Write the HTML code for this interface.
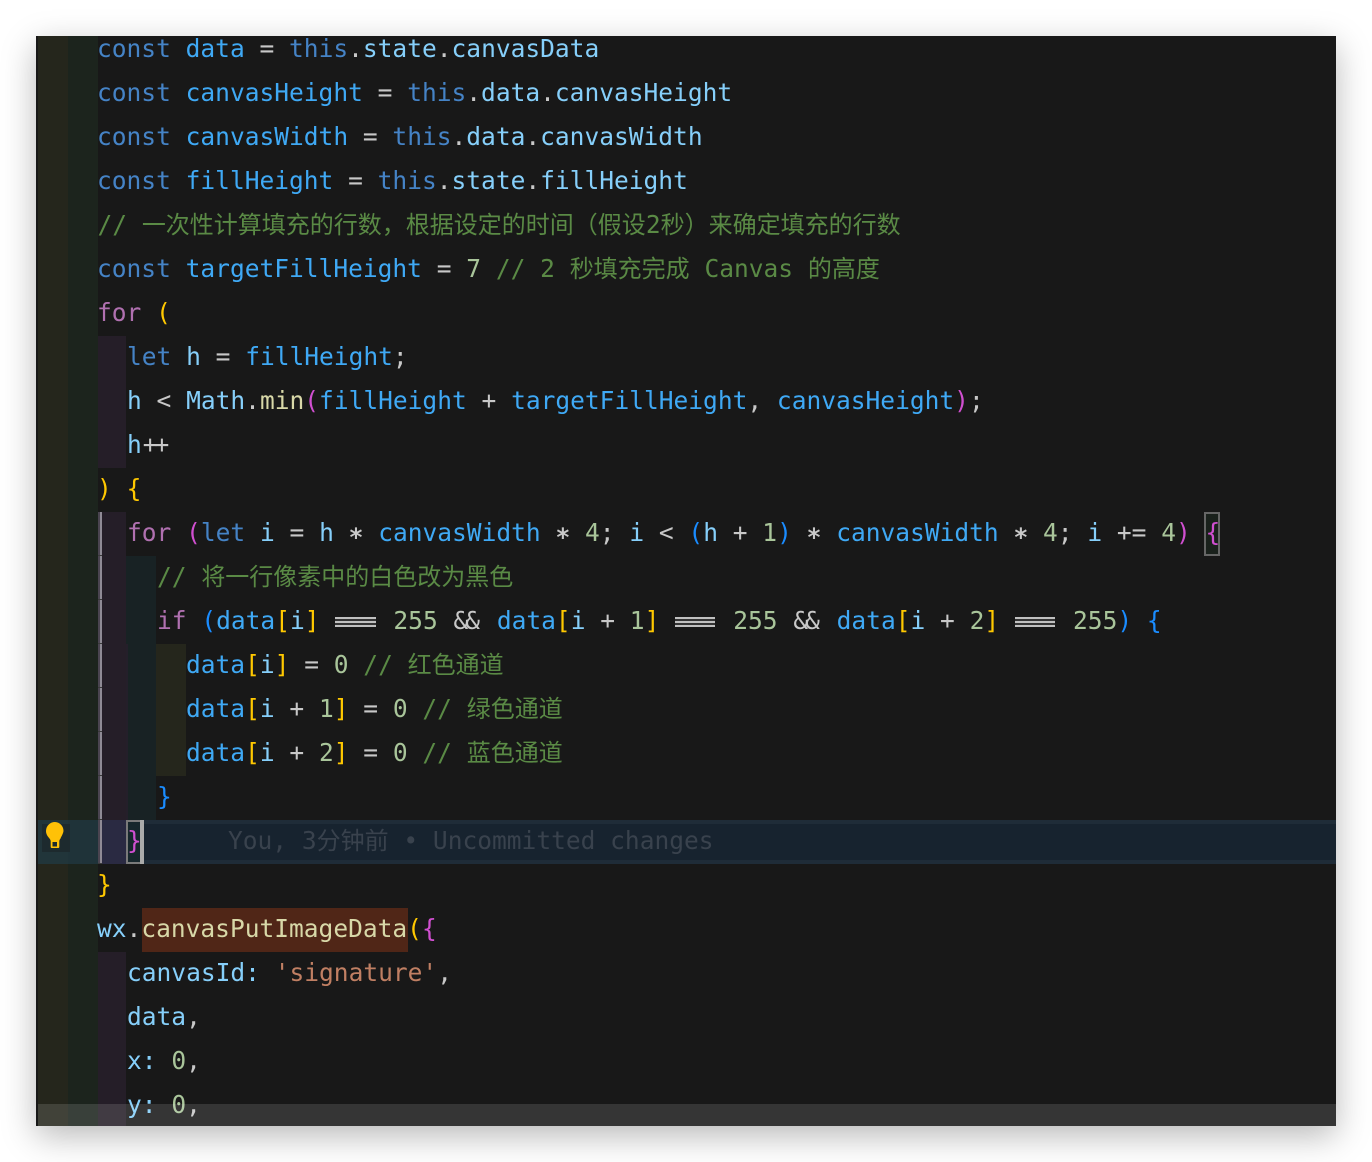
<!DOCTYPE html>
<html>
<head>
<meta charset="utf-8">
<style>
html,body{margin:0;padding:0;background:#fff}
body{width:1372px;height:1162px;position:relative;overflow:hidden}
#win{position:absolute;left:36px;top:36px;width:1300px;height:1090px;background:#181818;overflow:hidden;box-shadow:0 10px 32px rgba(0,0,0,.28)}
.b{position:absolute}
.l{position:absolute;height:44px;line-height:44px;margin-top:-1px;white-space:pre;font-family:"DejaVu Sans Mono","Liberation Mono","Noto Sans CJK SC",monospace;font-size:24.54px;color:#c8c8c8;-webkit-font-smoothing:antialiased}
.z{font-family:"Noto Sans CJK SC","WenQuanYi Zen Hei",sans-serif;font-size:24px;line-height:0}
.k{color:#4583c6}.v{color:#3fa9f5}.p{color:#86cffa}.o{color:#c8c8c8}
.f{color:#b070b0}.c{color:#5a8a45}.n{color:#a9c59a}.s{color:#c07f63}.y{color:#d8d8a8}
.g{color:#ffc800}.m{color:#d04fd0}.u{color:#1a8cff}.h{color:#39424d}
.eq{color:transparent;display:inline-block;position:relative}
.eq:before{content:"";position:absolute;left:1px;right:3px;top:18px;height:10px;background:linear-gradient(#c0c0c0 0 2px,#333 2px 4px,#c0c0c0 4px 6px,#333 6px 8px,#c0c0c0 8px 10px)}
.am{letter-spacing:-3px;margin-left:1px;margin-right:5px}
.pl{letter-spacing:-3px;margin-left:1px;margin-right:5px}
.st{position:relative;top:5px;font-weight:bold}
</style>
</head>
<body>
<div id="win">
  <!-- gutter -->
  <div class="b" style="left:2px;top:0;width:30px;height:1090px;background:#25261c"></div>
  <div class="b" style="left:32px;top:0;width:30px;height:1090px;background:#1c241d"></div>
  <!-- indent guides -->
  <div class="b" style="left:62px;top:300px;width:28px;height:132px;background:#251e28"></div>
  <div class="b" style="left:62px;top:476px;width:28px;height:352px;background:#251e28"></div>
  <div class="b" style="left:62px;top:916px;width:28px;height:174px;background:#251e28"></div>
  <div class="b" style="left:90px;top:520px;width:30px;height:264px;background:#182224"></div>
  <div class="b" style="left:90px;top:608px;width:2px;height:176px;background:#241f2a"></div>
  <div class="b" style="left:120px;top:608px;width:30px;height:132px;background:#25261c"></div>
  <!-- highlighted line -->
  <div class="b" style="left:2px;top:784px;width:1298px;height:44px;background:#17232f;box-sizing:border-box;border-top:4px solid #1f2c38;border-bottom:4px solid #1f2c38"></div>
  <div class="b" style="left:2px;top:784px;width:30px;height:44px;background:#21353a"></div>
  <div class="b" style="left:32px;top:784px;width:30px;height:44px;background:#1f3339"></div>
  <div class="b" style="left:62px;top:784px;width:28px;height:44px;background:#2a2a42"></div>
  <div class="b" style="left:6px;top:788px;width:28px;height:28px;background:#1d2a2e"></div>
  <!-- bar for scope -->
  <div class="b" style="left:62px;top:476px;width:2px;height:352px;background:repeating-linear-gradient(#4a4450 0 43px,#3a3a3a 43px 44px)"></div>
  <div class="b" style="left:64px;top:476px;width:2px;height:352px;background:repeating-linear-gradient(#8f8a95 0 43px,#3a3a3a 43px 44px)"></div>
  <!-- match bracket boxes -->
  <div class="b" style="left:90px;top:784px;width:18px;height:44px;box-sizing:border-box;border:2px solid #7a7a7a;border-right:none;background:#17272c"></div>
  <div class="b" style="left:104px;top:784px;width:4px;height:44px;background:#aaa"></div>
  <div class="b" style="left:1168px;top:476px;width:16px;height:44px;box-sizing:border-box;border:2px solid #666;background:#1a211c"></div>
  <!-- find highlight -->
  <div class="b" style="left:106px;top:872px;width:266px;height:44px;background:#502617"></div>
  <!-- bulb -->
  <svg class="b" style="left:9px;top:785px" width="20" height="28" viewBox="0 0 20 28"><path d="M10 1a9 9 0 0 0-9 9c0 3.4 1.8 5.4 3.4 7.4.8 1 1.3 2 1.3 3V26a1 1 0 0 0 1 1h6.600a1 1 0 0 0 1-1v-5.600c0-1 .5-2 1.300-3C16.200 15.400 18 13.400 18.500 10A9 9 0 0 0 10 1z" fill="#ffc107"/><rect x="7.500" y="21" width="4.500" height="4.500" fill="#1d2a2e"/></svg>

  <div class="l" style="left:61px;top:-8px"><span class="k">const</span> <span class="v">data</span> = <span class="k">this</span>.<span class="p">state</span>.<span class="p">canvasData</span></div>
  <div class="l" style="left:61px;top:36px"><span class="k">const</span> <span class="v">canvasHeight</span> = <span class="k">this</span>.<span class="p">data</span>.<span class="p">canvasHeight</span></div>
  <div class="l" style="left:61px;top:80px"><span class="k">const</span> <span class="v">canvasWidth</span> = <span class="k">this</span>.<span class="p">data</span>.<span class="p">canvasWidth</span></div>
  <div class="l" style="left:61px;top:124px"><span class="k">const</span> <span class="v">fillHeight</span> = <span class="k">this</span>.<span class="p">state</span>.<span class="p">fillHeight</span></div>
  <div class="l c" style="left:61.500px;top:168px">// <span class="z">一次性计算填充的行数，根据设定的时间（假设</span>2<span class="z">秒）来确定填充的行数</span></div>
  <div class="l" style="left:61px;top:212px"><span class="k">const</span> <span class="v">targetFillHeight</span> = <span class="n">7</span> <span class="c">// 2 <span class="z">秒填充完成</span> Canvas <span class="z">的高度</span></span></div>
  <div class="l" style="left:61px;top:256px"><span class="f">for</span> <span class="g">(</span></div>
  <div class="l" style="left:91px;top:300px"><span class="k">let</span> <span class="p">h</span> = <span class="v">fillHeight</span>;</div>
  <div class="l" style="left:91px;top:344px"><span class="p">h</span> &lt; <span class="p">Math</span>.<span class="y">min</span><span class="m">(</span><span class="v">fillHeight</span> + <span class="v">targetFillHeight</span>, <span class="v">canvasHeight</span><span class="m">)</span>;</div>
  <div class="l" style="left:91px;top:388px"><span class="p">h</span><span class="pl">++</span></div>
  <div class="l" style="left:61px;top:432px"><span class="g">)</span> <span class="g">{</span></div>
  <div class="l" style="left:91px;top:476px"><span class="f">for</span> <span class="m">(</span><span class="k">let</span> <span class="p">i</span> = <span class="p">h</span> <span class="st">*</span> <span class="v">canvasWidth</span> <span class="st">*</span> <span class="n">4</span>; <span class="p">i</span> &lt; <span class="u">(</span><span class="p">h</span> + <span class="n">1</span><span class="u">)</span> <span class="st">*</span> <span class="v">canvasWidth</span> <span class="st">*</span> <span class="n">4</span>; <span class="p">i</span> += <span class="n">4</span><span class="m">)</span> <span class="m">{</span></div>
  <div class="l c" style="left:121px;top:520px">// <span class="z">将一行像素中的白色改为黑色</span></div>
  <div class="l" style="left:121px;top:564px"><span class="f">if</span> <span class="u">(</span><span class="v">data</span><span class="g">[</span><span class="p">i</span><span class="g">]</span> <span class="eq">===</span> <span class="n">255</span> <span class="am">&amp;&amp;</span> <span class="v">data</span><span class="g">[</span><span class="p">i</span> + <span class="n">1</span><span class="g">]</span> <span class="eq">===</span> <span class="n">255</span> <span class="am">&amp;&amp;</span> <span class="v">data</span><span class="g">[</span><span class="p">i</span> + <span class="n">2</span><span class="g">]</span> <span class="eq">===</span> <span class="n">255</span><span class="u">)</span> <span class="u">{</span></div>
  <div class="l" style="left:150px;top:608px"><span class="v">data</span><span class="g">[</span><span class="p">i</span><span class="g">]</span> = <span class="n">0</span> <span class="c">// <span class="z">红色通道</span></span></div>
  <div class="l" style="left:150px;top:652px"><span class="v">data</span><span class="g">[</span><span class="p">i</span> + <span class="n">1</span><span class="g">]</span> = <span class="n">0</span> <span class="c">// <span class="z">绿色通道</span></span></div>
  <div class="l" style="left:150px;top:696px"><span class="v">data</span><span class="g">[</span><span class="p">i</span> + <span class="n">2</span><span class="g">]</span> = <span class="n">0</span> <span class="c">// <span class="z">蓝色通道</span></span></div>
  <div class="l u" style="left:121px;top:740px">}</div>
  <div class="l m" style="left:91px;top:784px">}</div>
  <div class="l h" style="left:192px;top:784px">You, 3<span class="z">分钟前</span> • Uncommitted changes</div>
  <div class="l g" style="left:61px;top:828px">}</div>
  <div class="l" style="left:61px;top:872px"><span class="p">wx</span>.<span class="y">canvasPutImageData</span><span class="g">(</span><span class="m">{</span></div>
  <div class="l" style="left:91px;top:916px"><span class="p">canvasId</span><span class="p">:</span> <span class="s">'signature'</span>,</div>
  <div class="l" style="left:91px;top:960px"><span class="p">data</span>,</div>
  <div class="l" style="left:91px;top:1004px"><span class="p">x</span><span class="p">:</span> <span class="n">0</span>,</div>
  <div class="l" style="left:91px;top:1048px"><span class="p">y</span><span class="p">:</span> <span class="n">0</span>,</div>
  <!-- bottom translucent bar -->
  <div class="b" style="left:2px;top:1068px;width:1298px;height:22px;background:rgba(255,255,255,.13)"></div>
</div>
</body>
</html>
